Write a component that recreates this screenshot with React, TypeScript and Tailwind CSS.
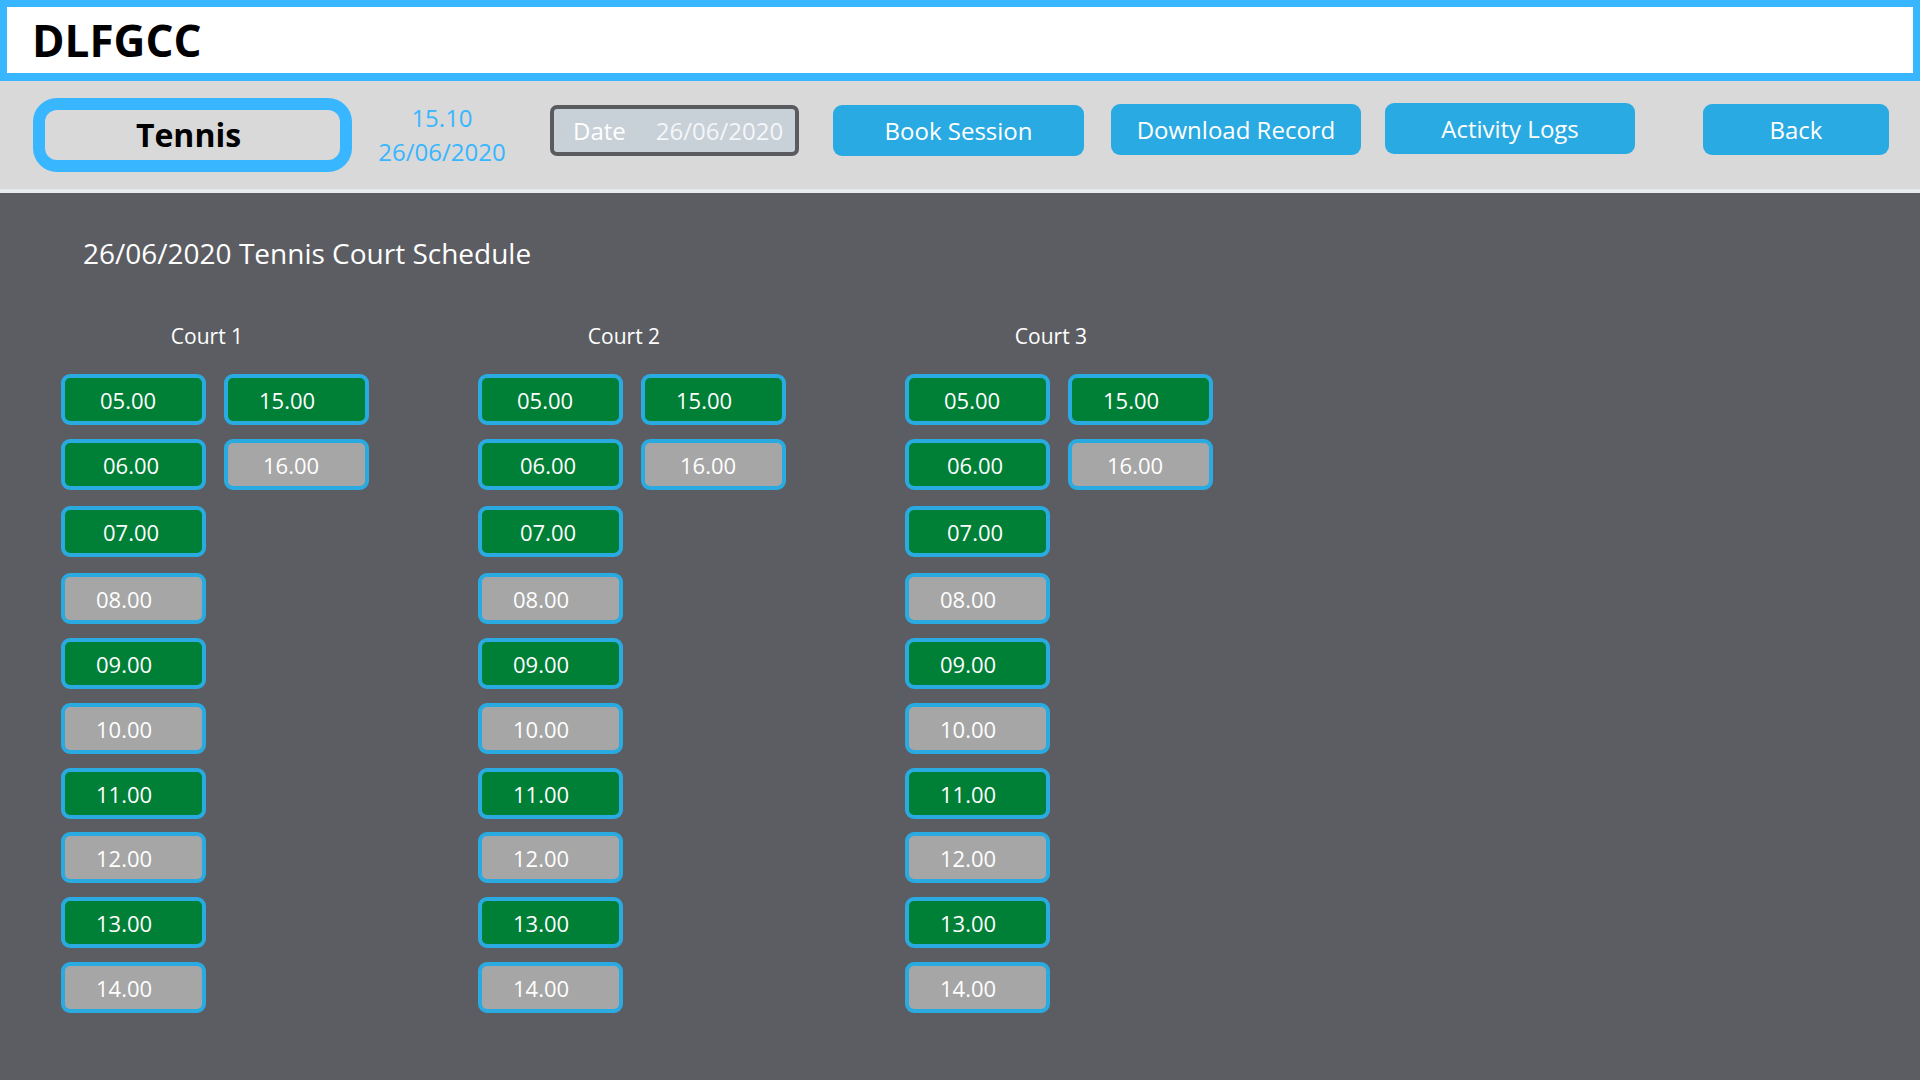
const slots = [
  { time: "05.00", free: true, gap: "mt-0", pad: "pl-[35px]" },
  { time: "06.00", free: true, gap: "mt-[14px]", pad: "pl-[38px]" },
  { time: "07.00", free: true, gap: "mt-[16px]", pad: "pl-[38px]" },
  { time: "08.00", free: false, gap: "mt-[16px]", pad: "pl-[31px]" },
  { time: "09.00", free: true, gap: "mt-[14px]", pad: "pl-[31px]" },
  { time: "10.00", free: false, gap: "mt-[14px]", pad: "pl-[31px]" },
  { time: "11.00", free: true, gap: "mt-[14px]", pad: "pl-[31px]" },
  { time: "12.00", free: false, gap: "mt-[13px]", pad: "pl-[31px]" },
  { time: "13.00", free: true, gap: "mt-[14px]", pad: "pl-[31px]" },
  { time: "14.00", free: false, gap: "mt-[14px]", pad: "pl-[31px]" },
];

const extra = [
  { time: "15.00", free: true, gap: "mt-0", pad: "pl-[31px]" },
  { time: "16.00", free: false, gap: "mt-[14px]", pad: "pl-[35px]" },
];

const courts = [
  { name: "Court 1", offset: "ml-0" },
  { name: "Court 2", offset: "ml-[109px]" },
  { name: "Court 3", offset: "ml-[119px]" },
];

function Slot({ time, free, gap, pad }: { time: string; free: boolean; gap: string; pad: string }) {
  return (
    <div
      className={`${gap} ${pad} flex h-[51px] w-[145px] items-center rounded-[9px] border-[4px] border-[#29abe2] text-[22px] leading-none text-white ${
        free ? "bg-[#008037]" : "bg-[#a6a6a6]"
      }`}
    >
      {time}
    </div>
  );
}

function ToolButton({ label, className }: { label: string; className: string }) {
  return (
    <button
      className={`${className} flex h-[51px] items-center justify-center rounded-[9px] bg-[#2aaae2] text-[24px] leading-none text-white`}
    >
      {label}
    </button>
  );
}

export default function App() {
  return (
    <div className="min-h-screen w-full bg-[#5c5d62] font-['Open_Sans',sans-serif]">
      {/* Title bar */}
      <header className="h-[81px] border-[7px] border-b-[8px] border-[#38b6ff] bg-white pl-[25px]">
        <h1 className="mt-[11px] text-[44px] font-bold leading-none text-black">DLFGCC</h1>
      </header>

      {/* Toolbar */}
      <div className="flex h-[112px] items-start border-b-[4px] border-[#e6ebf0] bg-[#d9d9d9] pl-[33px]">
        <div className="mt-[17px] flex h-[74px] w-[319px] items-center justify-center rounded-[24px] border-[12px] border-[#38b6ff] bg-[#d9d9d9]">
          <span className="pr-[8px] text-[32px] font-bold leading-none text-black">Tennis</span>
        </div>
        <div className="mt-[20px] w-[180px] text-center text-[24px] leading-[34px] text-[#38b6ff]">
          <div>15.10</div>
          <div>26/06/2020</div>
        </div>
        <div className="ml-[18px] mt-[24px] flex h-[51px] w-[249px] items-center rounded-[7px] border-[4px] border-[#5a5b5f] bg-[#c8d0d8] pl-[19px] text-[24px] leading-none">
          <span className="text-white">Date</span>
          <span className="ml-[30px] text-[#f4f6f8]">26/06/2020</span>
        </div>
        <ToolButton label="Book Session" className="ml-[34px] mt-[24px] w-[251px]" />
        <ToolButton label="Download Record" className="ml-[27px] mt-[23px] w-[250px]" />
        <ToolButton label="Activity Logs" className="ml-[24px] mt-[22px] w-[250px]" />
        <ToolButton label="Back" className="ml-[68px] mt-[23px] w-[186px]" />
      </div>

      {/* Schedule */}
      <main className="pl-[61px] pb-[53px]">
        <h2 className="ml-[22px] pt-[46px] text-[28px] leading-none text-white">
          26/06/2020 Tennis Court Schedule
        </h2>
        <div className="mt-[59px] flex">
          {courts.map((c) => (
            <section key={c.name} className={`${c.offset} w-[308px]`}>
              <div className="pr-[16px] text-center text-[21px] leading-none text-white">{c.name}</div>
              <div className="mt-[27px] flex gap-[18px]">
                <div className="flex flex-col">
                  {slots.map((s) => (
                    <Slot key={s.time} {...s} />
                  ))}
                </div>
                <div className="flex flex-col">
                  {extra.map((s) => (
                    <Slot key={s.time} {...s} />
                  ))}
                </div>
              </div>
            </section>
          ))}
        </div>
      </main>
    </div>
  );
}
